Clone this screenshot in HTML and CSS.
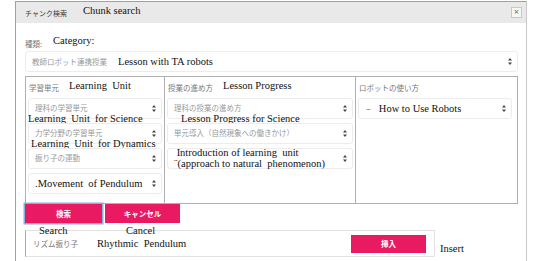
FILE: index.html
```html
<!DOCTYPE html>
<html lang="ja">
<head>
<meta charset="UTF-8">
<title>チャンク検索</title>
<link rel="stylesheet" href="styles.css">
</head>
<body>
<div class="modal">
    <div class="modal-head">
        <span class="head-title">チャンク検索</span>
        <span class="note head-note">Chunk search</span>
        <span class="close">×</span>
    </div>
    <div class="modal-body">
        <div class="field-label">
            <span class="jp-label">種類:</span>
            <span class="note">Category:</span>
        </div>
        <div class="select">
            <span class="jp-value">教師ロボット連携授業</span>
            <span class="note cat-note">Lesson with TA robots</span>
            <svg class="arrows" width="4" height="7" viewBox="0 0 4 7"><path d="M2 0L4 2.6H0Z M2 7L0 4.4H4Z" fill="#444"/></svg>
        </div>

        <div class="grid">
            <div class="cell">
                <div class="cell-label">
                    <span class="jp-label">学習単元</span>
                    <span class="note">Learning&nbsp; Unit</span>
                </div>
                <div class="stack">
                    <div class="select">
                        <span class="jp-value">理科の学習単元</span>
                        <svg class="arrows" width="4" height="7" viewBox="0 0 4 7"><path d="M2 0L4 2.6H0Z M2 7L0 4.4H4Z" fill="#444"/></svg>
                        <span class="note overlay ov-1">Learning&nbsp; Unit&nbsp; for Science</span>
                    </div>
                    <div class="select">
                        <span class="jp-value">力学分野の学習単元</span>
                        <svg class="arrows" width="4" height="7" viewBox="0 0 4 7"><path d="M2 0L4 2.6H0Z M2 7L0 4.4H4Z" fill="#444"/></svg>
                        <span class="note overlay ov-2">Learning&nbsp; Unit&nbsp; for Dynamics</span>
                    </div>
                    <div class="select">
                        <span class="jp-value">振り子の運動</span>
                        <svg class="arrows" width="4" height="7" viewBox="0 0 4 7"><path d="M2 0L4 2.6H0Z M2 7L0 4.4H4Z" fill="#444"/></svg>
                    </div>
                    <div class="select">
                        <span class="note">.Movement&nbsp; of Pendulum</span>
                        <svg class="arrows" width="4" height="7" viewBox="0 0 4 7"><path d="M2 0L4 2.6H0Z M2 7L0 4.4H4Z" fill="#444"/></svg>
                    </div>
                </div>
            </div>

            <div class="cell">
                <div class="cell-label">
                    <span class="jp-label">授業の進め方</span>
                    <span class="note">Lesson Progress</span>
                </div>
                <div class="stack">
                    <div class="select">
                        <span class="jp-value">理科の授業の進め方</span>
                        <svg class="arrows" width="4" height="7" viewBox="0 0 4 7"><path d="M2 0L4 2.6H0Z M2 7L0 4.4H4Z" fill="#444"/></svg>
                        <span class="note overlay ov-3">Lesson Progress for Science</span>
                    </div>
                    <div class="select">
                        <span class="jp-value">単元導入（自然現象への働きかけ）</span>
                        <svg class="arrows" width="4" height="7" viewBox="0 0 4 7"><path d="M2 0L4 2.6H0Z M2 7L0 4.4H4Z" fill="#444"/></svg>
                    </div>
                    <div class="select">
                        <span class="note two-line">&nbsp;Introduction of learning&nbsp; unit<br>¨(approach to natural&nbsp; phenomenon)</span>
                        <svg class="arrows" width="4" height="7" viewBox="0 0 4 7"><path d="M2 0L4 2.6H0Z M2 7L0 4.4H4Z" fill="#444"/></svg>
                    </div>
                </div>
            </div>

            <div class="cell last">
                <div class="cell-label">
                    <span class="jp-label">ロボットの使い方</span>
                </div>
                <div class="stack">
                    <div class="select">
                        <span class="dash">–</span>
                        <span class="note">How to Use Robots</span>
                        <svg class="arrows" width="4" height="7" viewBox="0 0 4 7"><path d="M2 0L4 2.6H0Z M2 7L0 4.4H4Z" fill="#444"/></svg>
                    </div>
                </div>
            </div>
        </div>

        <div class="actions">
            <button class="btn btn-search">検索<span class="note btn-note search-note">Search</span></button>
            <button class="btn btn-cancel">キャンセル<span class="note btn-note cancel-note">Cancel</span></button>
        </div>

        <div class="result-row">
            <div class="result-box">
                <span class="jp-label">リズム振り子</span>
                <span class="note result-note">Rhythmic&nbsp; Pendulum</span>
                <button class="btn btn-insert">挿入</button>
            </div>
            <span class="note insert-note">Insert</span>
        </div>
    </div>
</div>
</body>
</html>
```

FILE: styles.css
```css
body {
    margin: 0;
    font-family: "Noto Sans CJK JP", "Noto Sans", sans-serif;
    background: #fff;
    overflow: hidden;
}
.modal {
    margin: 1px 0 0 15px;
    width: 512px;
    height: 300px;
    box-sizing: border-box;
    border: 1px solid #a0a0a0;
    border-right-color: #c8c8c8;
}
.modal-head {
    display: flex;
    align-items: center;
    height: 21px;
    padding: 0 4px 0 9px;
    background: #e9e9e9;
}
.head-title {
    font-size: 7px;
    color: #3a3a3a;
}
.head-note {
    margin-left: 16px;
    margin-top: -4px;
}
.close {
    margin-left: auto;
    width: 9px;
    height: 9px;
    border: 1px solid #c8c8c8;
    background: #f6f6f6;
    font-family: "DejaVu Sans", sans-serif;
    font-size: 7px;
    line-height: 9px;
    text-align: center;
    color: #555;
}
.note {
    font-family: "Liberation Serif", serif;
    font-size: 10.5px;
    line-height: 12px;
    color: #111;
    font-weight: normal;
    white-space: nowrap;
}
.modal-body {
    padding: 12px 8px 0 9px;
}
.field-label {
    display: flex;
    align-items: center;
    gap: 11px;
    height: 16px;
}
.field-label .note {
    margin-top: -4px;
}
.jp-label {
    font-size: 7.5px;
    line-height: 9px;
    color: #777;
    white-space: nowrap;
}
.jp-value {
    font-size: 7.5px;
    line-height: 9px;
    color: #999;
    white-space: nowrap;
}
.select {
    position: relative;
    display: flex;
    align-items: center;
    height: 21px;
    box-sizing: border-box;
    padding: 0 5px 0 6px;
    border: 1px solid #ececec;
    border-radius: 3px;
}
.cat-note {
    margin-left: 11px;
}
.arrows {
    margin-left: auto;
    flex-shrink: 0;
}
.grid {
    display: grid;
    grid-template-columns: 139px 191px 1fr;
    height: 128px;
    margin-top: 4px;
    box-sizing: border-box;
    border: 1px solid #b0b0b0;
}
.cell {
    padding: 0 2px 0 2px;
    border-right: 1px solid #b0b0b0;
}
.cell.last {
    border-right: none;
    padding-right: 5px;
}
.cell-label {
    display: flex;
    align-items: center;
    gap: 10px;
    height: 21px;
    padding-left: 1px;
}
.cell-label .note {
    margin-top: -3px;
}
.stack {
    display: flex;
    flex-direction: column;
    gap: 4px;
}
.stack .jp-value {
    margin-top: -3px;
}
.overlay {
    position: absolute;
    top: 100%;
    line-height: 10px;
    transform: translateY(-4px);
}
.ov-1 {
    left: -1px;
}
.ov-2 {
    left: 2px;
}
.ov-3 {
    left: 13px;
}
.two-line {
    line-height: 11px;
    margin-top: -2px;
}
.dash {
    font-size: 9px;
    color: #666;
    margin-left: 1px;
    margin-right: 8px;
}
.actions {
    display: flex;
    gap: 3px;
    height: 19px;
}
.btn {
    position: relative;
    height: 19px;
    padding: 0;
    border: none;
    background: #e91a62;
    color: #fff;
    font-family: "Noto Sans CJK JP", sans-serif;
    font-size: 7.5px;
    font-weight: bold;
    cursor: pointer;
}
.btn-search {
    width: 77px;
    box-shadow: 0 0 0 1.5px #80b0e6;
}
.btn-cancel {
    width: 75px;
}
.btn-note {
    position: absolute;
    top: 0;
    margin-top: 21px;
}
.search-note {
    left: 14px;
}
.cancel-note {
    left: 21px;
}
.result-row {
    display: flex;
    align-items: flex-start;
    gap: 5px;
    margin-top: 7px;
}
.result-box {
    display: flex;
    align-items: center;
    width: 410px;
    height: 27px;
    box-sizing: border-box;
    padding: 0 8px 0 7px;
    border: 1px solid #e2e2e2;
    border-left-color: #aaa;
}
.result-note {
    margin-left: 19px;
}
.btn-insert {
    margin-left: auto;
    width: 75px;
    height: 18px;
}
.insert-note {
    margin-top: 13px;
}
```
